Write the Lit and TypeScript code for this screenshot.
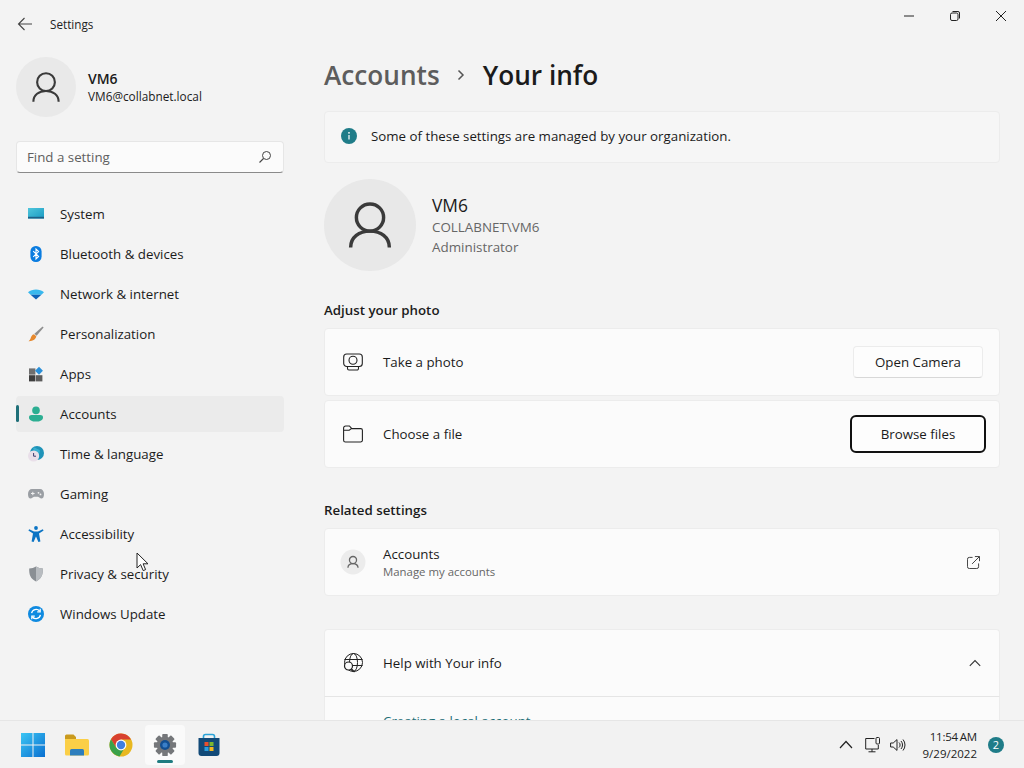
import { LitElement, html, css, svg } from "lit";
import { customElement } from "lit/decorators.js";

const person = (color: string, w = 1.8) => svg`<circle cx="12" cy="8.100" r="7.100" fill="none" stroke=${color} stroke-width=${w}/><path d="M1.900 23.700c0-5.400 4.500-8.500 10.100-8.500s10.100 3.100 10.100 8.500" fill="none" stroke=${color} stroke-width=${w}/>`;

const navIcons: Record<string, unknown> = {
  system: svg`<defs><linearGradient id="sy" x1="0" y1="0" x2="1" y2="1"><stop offset="0" stop-color="#4fc6dc"/><stop offset="1" stop-color="#1a9ac2"/></linearGradient></defs><rect x="0" y="2" width="16" height="10.500" fill="url(#sy)"/><rect x="0" y="10.800" width="16" height="1.700" fill="#1d5f86"/>`,
  bluetooth: svg`<rect x="2.400" y="0" width="11.200" height="16" rx="5.400" fill="#0a7ce0"/><path d="M5.200 5.200 10.600 10.400 8 13V3l2.600 2.600L5.200 10.800" fill="none" stroke="#fff" stroke-width="1.100"/>`,
  network: svg`<path d="M0 6.200C2.200 4.400 5 3.400 8 3.400s5.800 1 8 2.800l-2.600 2.600H2.600z" fill="#38b8ee"/><path d="M2.600 8.800h10.800L8 13.600z" fill="#0d62b8"/>`,
  personal: svg`<path d="M14.600 .6 15.600 1.600 8.600 9.800 6.400 7.800z" fill="#8e8e8e"/><path d="M6 8.200 8.300 10.300C8 13 5 15.400 .6 15.200 2.600 13.800 2.600 11.600 3.600 10 4.200 9 5 8.400 6 8.200z" fill="#e6892e"/>`,
  apps: svg`<rect x="1" y="2.400" width="6.400" height="6.200" fill="#6f6f6f"/><rect x="1" y="9.200" width="6.400" height="6.200" fill="#3e3e3e"/><rect x="8" y="9.200" width="6.400" height="6.200" fill="#5c5c5c"/><rect x="8.200" y="2" width="5.600" height="5.600" transform="rotate(45 11 4.800)" fill="#2a8fd8"/>`,
  accounts: svg`<circle cx="8" cy="4.400" r="3.800" fill="#2cae92"/><path d="M1 11.400C1 9.800 2.200 9 3.600 9h8.800c1.400 0 2.600.8 2.600 2.400 0 2.600-3 4.200-7 4.200s-7-1.600-7-4.200z" fill="#2cae92"/>`,
  time: svg`<circle cx="9" cy="7" r="7" fill="#1f93b8"/><path d="M5 1.500c3 0 5 2 7 3l-1 4-4 1z" fill="#3fb6d6" opacity=".8"/><circle cx="5.600" cy="10" r="5.600" fill="#e9dfe9"/><path d="M5.600 7v3.200h2.400" fill="none" stroke="#3b3b6d" stroke-width="1"/>`,
  gaming: svg`<path d="M4 3h8c2.400 0 4 2 4 5s-1 4.600-2.600 4.600c-1.400 0-2-1.400-3.400-1.800H6c-1.400.4-2 1.800-3.400 1.800C1 12.600 0 11 0 8s1.600-5 4-5z" fill="#9a9ea3"/><path d="M3 7.500h3.600M4.800 5.800v3.400" stroke="#f0f0f0" stroke-width="1"/><circle cx="10.500" cy="6.800" r=".9" fill="#f0f0f0"/><circle cx="12.500" cy="8.400" r=".9" fill="#f0f0f0"/>`,
  access: svg`<circle cx="8" cy="2" r="1.900" fill="#0b74c4"/><path d="M1.200 3.200 6 5.600h4l4.800-2.400.8 1.400L11 7.400 12.400 15.600l-2 .4L8 10.400 5.600 16l-2-.4L5 7.400.4 4.600z" fill="#0b74c4"/>`,
  privacy: svg`<path d="M8 .6c2 1.200 4.200 1.800 6.800 2 .2 5.600-1 10.400-6.800 12.800C2.200 13 1 8.200 1.200 2.600 3.800 2.400 6 1.800 8 .6z" fill="#8a8f94"/><path d="M8 .6c2 1.200 4.200 1.800 6.800 2 .2 5.600-1 10.400-6.800 12.800z" fill="#b8bcc0"/>`,
  update: svg`<circle cx="8" cy="8" r="8" fill="#0f8ae0"/><path d="M3.600 7.200A4.600 4.600 0 0 1 11.600 5M12.400 8.800A4.600 4.600 0 0 1 4.400 11" fill="none" stroke="#fff" stroke-width="1.300"/><path d="M12.200 2.800v3h-3M3.800 13.200v-3h3" fill="none" stroke="#fff" stroke-width="1.200"/>`,
};

const nav: [string, string][] = [
  ["system", "System"],
  ["bluetooth", "Bluetooth & devices"],
  ["network", "Network & internet"],
  ["personal", "Personalization"],
  ["apps", "Apps"],
  ["accounts", "Accounts"],
  ["time", "Time & language"],
  ["gaming", "Gaming"],
  ["access", "Accessibility"],
  ["privacy", "Privacy & security"],
  ["update", "Windows Update"],
];

const teeth = [0, 45, 90, 135, 180, 225, 270, 315];

@customElement("app-root")
export class AppRoot extends LitElement {
  static styles = css`
    :host { display: block; width: 1024px; height: 768px; overflow: hidden; position: relative; background: #f3f3f3; font-family: "Open Sans", "Noto Sans", sans-serif; color: #1b1b1b; font-size: 13.300px; }
    svg { display: block; flex: none; }
    .window { display: flex; height: 720px; overflow: hidden; }
    .side { box-sizing: border-box; width: 300px; padding: 0 16px; margin-right: 24px; flex: none; }
    .title { height: 48px; display: flex; align-items: center; font-size: 11.700px; color: #222; gap: 17px; padding-left: 1px; }
    .profile { display: flex; align-items: center; gap: 12px; margin-top: 9px; height: 60px; }
    .avatar { width: 60px; height: 60px; border-radius: 50%; background: #e9e9e9; display: flex; align-items: center; justify-content: center; flex: none; }
    .pname { font-weight: 600; font-size: 14px; line-height: 18px; }
    .pmail { font-size: 11.800px; line-height: 17px; }
    .search { margin-top: 24px; height: 32px; box-sizing: border-box; background: #fbfbfb; border: 1px solid #e6e6e6; border-bottom: 1px solid #8a8a8a; border-radius: 4px; display: flex; align-items: center; justify-content: space-between; padding: 0 11px 0 10px; color: #5f5f5f; }
    .navlist { margin-top: 23px; display: flex; flex-direction: column; gap: 4px; }
    .item { height: 36px; display: flex; align-items: center; gap: 16px; padding-left: 12px; border-radius: 4px; position: relative; }
    .item.on { background: #ebebeb; }
    .item.on::before { content: ""; position: absolute; left: 0; top: 9px; width: 3px; height: 17px; border-radius: 2px; background: #1f6f78; }
    .main { flex: none; width: 676px; }
    .caption { height: 32px; display: flex; justify-content: flex-end; margin-right: -24px; }
    .capbtn { width: 46px; height: 32px; display: flex; align-items: center; justify-content: center; }
    .crumb { display: flex; align-items: center; height: 44px; margin-top: 21px; font-size: 26.200px; font-weight: 600; }
    .crumb .a { color: #5d5d5d; }
    .crumb svg { margin: 0 18px 0 17px; }
    .card { background: #fbfbfb; border: 1px solid #ececec; border-radius: 4px; box-sizing: border-box; display: flex; align-items: center; }
    .info { margin-top: 14px; height: 52px; background: #f6f6f6; padding: 0 0 2px 16px; gap: 14px; }
    .hero { display: flex; align-items: center; gap: 16px; margin-top: 16px; height: 92px; }
    .hero .avatar { width: 92px; height: 92px; background: #e8e8e8; }
    .hname { font-size: 17.400px; line-height: 23px; margin-top: 1px; }
    .hsub { color: #666; line-height: 20px; font-size: 13.400px; }
    .section { font-weight: 600; height: 18px; line-height: 18px; }
    .s1 { margin-top: 30px; }
    .s2 { margin-top: 33px; }
    .stack { display: flex; flex-direction: column; gap: 4px; margin-top: 9px; }
    .row { height: 68px; padding: 0 16px; }
    .ic { width: 42px; box-sizing: border-box; padding-left: 2px; flex: none; display: flex; align-items: center; }
    .ic.round { padding-left: 0; margin-left: -1px; width: 43px; }
    .lbl { flex: 1; }
    .btn { width: 130px; height: 32px; margin-left: auto; box-sizing: border-box; border: 1px solid #ececec; border-bottom-color: #d8d8d8; border-radius: 4px; background: #fdfdfd; display: flex; align-items: center; justify-content: center; }
    .btn.focus { border: 2px solid #111; width: 136px; height: 38px; border-radius: 6px; margin-right: -3px; }
    .sub { font-size: 11.400px; color: #666; line-height: 16px; }
    .lbl2 { line-height: 19px; }
    .ext { margin-right: 3px; }
    .chev { margin-right: 2px; }
    .help { margin-top: 33px; border-radius: 4px 4px 0 0; border-bottom: 1px solid #e5e5e5; }
    .helpnext { height: 40px; background: #fbfbfb; border: 1px solid #ececec; border-top: none; padding: 15px 0 0 58px; color: #1f6f78; box-sizing: border-box; line-height: 18px; }
    .task { height: 48px; display: flex; align-items: center; border-top: 1px solid #e6e6e6; box-sizing: border-box; background: #f2f2f2; padding-left: 13px; }
    .tb { width: 40px; height: 40px; margin-right: 4px; display: flex; align-items: center; justify-content: center; position: relative; border-radius: 4px; }
    .tb.on { background: #fafafa; }
    .tb.on::after { content: ""; position: absolute; bottom: 2px; left: 12px; width: 16px; height: 3px; border-radius: 2px; background: #1f7c80; }
    .tray { margin-left: auto; display: flex; align-items: center; padding-right: 20px; }
    .t-chev { margin-right: 12px; }
    .t-net { margin-right: 9px; }
    .clock { text-align: right; font-size: 11.500px; line-height: 17px; margin-left: 17px; color: #222; }
    .clock .tm { word-spacing: -1px; letter-spacing: -.2px; }
    .badge { width: 16px; height: 16px; border-radius: 50%; background: #1f7c88; color: #fff; font-size: 11px; display: flex; align-items: center; justify-content: center; margin-left: 11px; }
    .cursor { position: absolute; left: 136px; top: 552px; }
  `;

  render() {
    return html`
      <div class="window">
        <div class="side">
          <div class="title">
            <svg width="16" height="16" viewBox="0 0 16 16"><path d="M15 8H1.500M7.500 2 1.500 8l6 6" fill="none" stroke="#444" stroke-width="1.100"/></svg>
            <span>Settings</span>
          </div>
          <div class="profile">
            <div class="avatar"><svg width="30" height="30" viewBox="0 0 24 24">${person("#3a3a3a", 1.700)}</svg></div>
            <div><div class="pname">VM6</div><div class="pmail">VM6@collabnet.local</div></div>
          </div>
          <div class="search">
            <span>Find a setting</span>
            <svg width="14" height="14" viewBox="0 0 14 14"><circle cx="8.500" cy="5.500" r="4" fill="none" stroke="#444" stroke-width="1"/><path d="M5.500 8.500 1.500 12.500" stroke="#444" stroke-width="1.100"/></svg>
          </div>
          <div class="navlist">
            ${nav.map(([k, label]) => html`
              <div class="item ${k === "accounts" ? "on" : ""}">
                <svg width="16" height="16" viewBox="0 0 16 16">${navIcons[k]}</svg>
                <span>${label}</span>
              </div>`)}
          </div>
        </div>
        <div class="main">
          <div class="caption">
            <div class="capbtn"><svg width="10" height="10" viewBox="0 0 10 10"><path d="M0 5h10" stroke="#222" stroke-width="1"/></svg></div>
            <div class="capbtn"><svg width="10" height="10" viewBox="0 0 10 10"><rect x=".5" y="2" width="7.500" height="7.500" rx="1.500" fill="none" stroke="#222"/><path d="M2.500 .5h5.500a1.500 1.500 0 0 1 1.500 1.500v5.500" fill="none" stroke="#222"/></svg></div>
            <div class="capbtn"><svg width="10" height="10" viewBox="0 0 10 10"><path d="M0 0l10 10M10 0 0 10" stroke="#222" stroke-width="1"/></svg></div>
          </div>
          <div class="crumb">
            <span class="a">Accounts</span>
            <svg width="8" height="12" viewBox="0 0 8 12"><path d="M1.500 1.500 6 6l-4.500 4.500" fill="none" stroke="#555" stroke-width="1.500"/></svg>
            <span>Your info</span>
          </div>
          <div class="card info">
            <svg width="16" height="16" viewBox="0 0 16 16"><circle cx="8" cy="8" r="8" fill="#1f7c88"/><path d="M8 7v4.500" stroke="#fff" stroke-width="1.200"/><circle cx="8" cy="4.800" r=".9" fill="#fff"/></svg>
            <span>Some of these settings are managed by your organization.</span>
          </div>
          <div class="hero">
            <div class="avatar"><svg width="46" height="46" viewBox="0 0 24 24">${person("#3a3a3a", 1.800)}</svg></div>
            <div>
              <div class="hname">VM6</div>
              <div class="hsub">COLLABNET\\VM6</div>
              <div class="hsub">Administrator</div>
            </div>
          </div>
          <div class="section s1">Adjust your photo</div>
          <div class="stack">
            <div class="card row">
              <div class="ic"><svg width="20" height="18" viewBox="0 0 20 18"><rect x=".7" y="1" width="18.600" height="12.500" rx="3" fill="none" stroke="#222" stroke-width="1.100"/><circle cx="10" cy="7.200" r="4" fill="none" stroke="#222" stroke-width="1.100"/><path d="M4.500 13.500v2a1.500 1.500 0 0 0 1.500 1.500h8a1.500 1.500 0 0 0 1.500-1.500v-2" fill="none" stroke="#222" stroke-width="1.100"/></svg></div>
              <span class="lbl">Take a photo</span>
              <div class="btn">Open Camera</div>
            </div>
            <div class="card row">
              <div class="ic"><svg width="20" height="18" viewBox="0 0 20 18"><path d="M.6 3a2 2 0 0 1 2-2h3.800l2.400 2.600h9a1.600 1.600 0 0 1 1.600 1.600v10a1.800 1.800 0 0 1-1.800 1.800H2.400a1.800 1.800 0 0 1-1.800-1.800zM.6 5.200h5.600l2.200-1.600" fill="none" stroke="#222" stroke-width="1.100"/></svg></div>
              <span class="lbl">Choose a file</span>
              <div class="btn focus">Browse files</div>
            </div>
          </div>
          <div class="section s2">Related settings</div>
          <div class="stack">
            <div class="card row">
              <div class="ic round"><svg width="26" height="26" viewBox="0 0 26 26"><circle cx="13" cy="13" r="12.500" fill="#ececec"/><g transform="translate(7 7) scale(.5)">${person("#666", 2.600)}</g></svg></div>
              <div class="lbl"><div class="lbl2">Accounts</div><div class="sub">Manage my accounts</div></div>
              <svg class="ext" width="13" height="13" viewBox="0 0 14 14"><path d="M6 1.500H2.500a2 2 0 0 0-2 2v8a2 2 0 0 0 2 2h8a2 2 0 0 0 2-2V8" fill="none" stroke="#333" stroke-width="1"/><path d="M5.500 8.500 13.200.800M8.500.600h5v5" fill="none" stroke="#333" stroke-width="1"/></svg>
            </div>
          </div>
          <div class="card row help">
            <div class="ic"><svg width="20" height="20" viewBox="0 0 20 20"><circle cx="10.500" cy="9.500" r="9" fill="none" stroke="#222" stroke-width="1"/><ellipse cx="10.500" cy="9.500" rx="4" ry="9" fill="none" stroke="#222" stroke-width="1"/><path d="M1.500 6.500h18M10 12.500h9.500" stroke="#222" stroke-width="1"/><circle cx="5.500" cy="13" r="4" fill="#fbfbfb" stroke="#222" stroke-width="1.200"/><path d="M8.500 16l3 3" stroke="#222" stroke-width="1.300"/></svg></div>
            <span class="lbl">Help with Your info</span>
            <svg class="chev" width="12" height="8" viewBox="0 0 12 8"><path d="M.8 6.800 6 1.500l5.200 5.300" fill="none" stroke="#333" stroke-width="1.100"/></svg>
          </div>
          <div class="helpnext">Creating a local account</div>
        </div>
      </div>
      <div class="task">
        <div class="tb">
          <svg width="24" height="24" viewBox="0 0 24 24"><defs><linearGradient id="w" x1="0" y1="0" x2="1" y2="1"><stop offset="0" stop-color="#3cc6f4"/><stop offset="1" stop-color="#0a6fd0"/></linearGradient></defs><path d="M0 0h11.500v11.500H0zM12.500 0H24v11.500H12.500zM0 12.500h11.500V24H0zM12.500 12.500H24V24H12.500z" fill="url(#w)"/></svg>
        </div>
        <div class="tb">
          <svg width="24" height="22" viewBox="0 0 24 22"><path d="M0 2a1.500 1.500 0 0 1 1.500-1.500h7L11 3v4H0z" fill="#c99a1e"/><path d="M0 5h22.500A1.500 1.500 0 0 1 24 6.500V20a1.500 1.500 0 0 1-1.500 1.500h-21A1.500 1.500 0 0 1 0 20z" fill="#fbcf47"/><path d="M5 21.500v-5a1.500 1.500 0 0 1 1.500-1.500h11a1.500 1.500 0 0 1 1.500 1.500v5z" fill="#2d7ebd"/></svg>
        </div>
        <div class="tb">
          <svg width="24" height="24" viewBox="0 0 24 24"><circle cx="12" cy="12" r="11.500" fill="#e8b820"/><path d="M12 .5A11.500 11.500 0 0 0 2 6.300L7 14.500l5-8h10a11.500 11.500 0 0 0-10-6z" fill="#d8402f"/><path d="M2 6.300A11.500 11.500 0 0 0 10.500 23.400l5-8.500L7 14.500z" fill="#3aa14a"/><circle cx="12" cy="12" r="5.400" fill="#fff"/><circle cx="12" cy="12" r="4.200" fill="#3f7fe0"/></svg>
        </div>
        <div class="tb on">
          <svg width="24" height="24" viewBox="0 0 26 26">
            ${teeth.map((a) => svg`<rect x="10" y="1" width="6" height="6" rx="1" fill="#75777a" transform="rotate(${a} 13 13)"/>`)}
            <circle cx="13" cy="13" r="9" fill="#75777a"/>
            <circle cx="13" cy="13" r="5.400" fill="#124f92"/>
            <circle cx="13" cy="13" r="2.800" fill="#3a7fc8"/>
          </svg>
        </div>
        <div class="tb">
          <svg width="24" height="24" viewBox="0 0 24 24"><path d="M6.500 6V3.500A2 2 0 0 1 8.500 1.500h7a2 2 0 0 1 2 2V6" fill="none" stroke="#2aa3d8" stroke-width="1.600"/><path d="M1.500 5h21v15a3 3 0 0 1-3 3h-15a3 3 0 0 1-3-3z" fill="#124a78"/><rect x="7.500" y="9" width="4" height="4" fill="#e8502f"/><rect x="12.500" y="9" width="4" height="4" fill="#7cb82f"/><rect x="7.500" y="14" width="4" height="4" fill="#2a9fe0"/><rect x="12.500" y="14" width="4" height="4" fill="#f4b81f"/></svg>
        </div>
        <div class="tray">
          <svg class="t-chev" width="14" height="9" viewBox="0 0 14 9"><path d="M1 8 7 1.500 13 8" fill="none" stroke="#222" stroke-width="1.200"/></svg>
          <svg class="t-net" width="16" height="16" viewBox="0 0 16 16"><path d="M9.500 1.500H.700v10.500h12.600V8M7 12v2.800M3.500 14.800h7" fill="none" stroke="#222" stroke-width="1"/><rect x="11" y=".5" width="3.500" height="6.500" rx="1" fill="none" stroke="#222" stroke-width="1"/></svg>
          <svg width="16" height="14" viewBox="0 0 16 14"><path d="M.6 5h2.600L7 1.600v10.800L3.200 9H.6z" fill="none" stroke="#222" stroke-width="1"/><path d="M9 4.500a3.400 3.400 0 0 1 0 5M11 3a6 6 0 0 1 0 8M13 1.500a8.600 8.600 0 0 1 0 11" fill="none" stroke="#222" stroke-width="1"/></svg>
          <div class="clock"><div class="tm">11:54 AM</div><div>9/29/2022</div></div>
          <div class="badge">2</div>
        </div>
      </div>
      <svg class="cursor" width="14" height="20" viewBox="0 0 14 20"><path d="M1 1v15l3.600-3.400 2.600 6 2.400-1-2.500-5.800H12z" fill="#fff" stroke="#222" stroke-width="1"/></svg>
    `;
  }
}
